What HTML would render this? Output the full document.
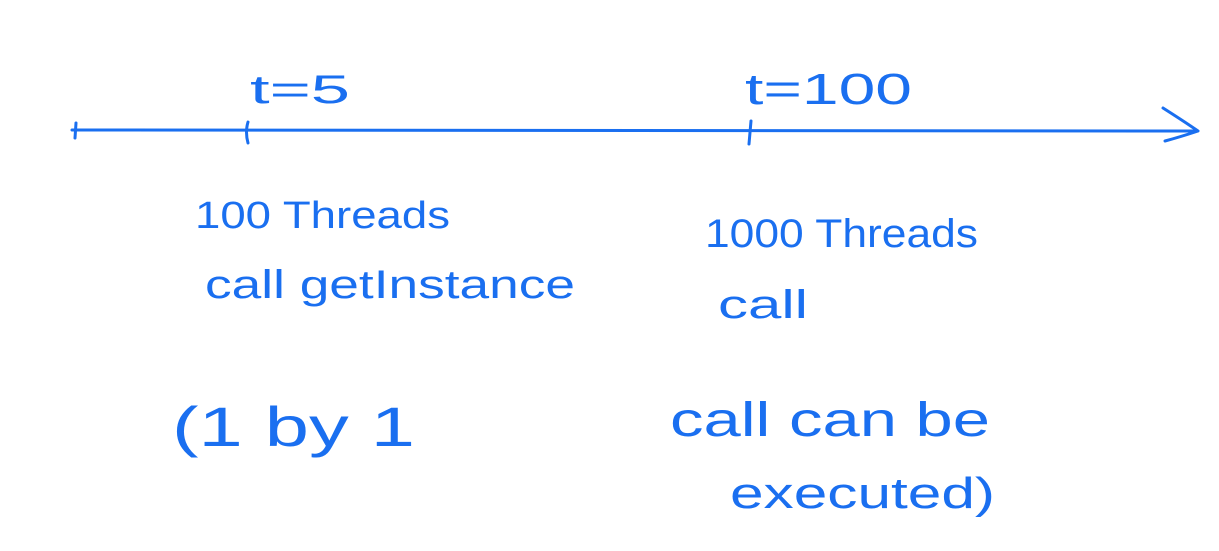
<!DOCTYPE html>
<html><head><meta charset="utf-8"><style>
html,body{margin:0;padding:0;background:#fff;}
svg{display:block}
text{font-family:"Liberation Sans",sans-serif;fill:#1a6ff0;}
</style></head><body>
<svg width="1219" height="551" viewBox="0 0 1219 551">
<g stroke="#1a6ff0" stroke-width="3" fill="none" stroke-linecap="round" stroke-linejoin="round">
<path d="M72 130 L1196 131"/>
<path d="M1163 108 Q1185 122 1198 131 Q1180 137 1165 141"/>
<path d="M76 123 L75 138"/>
<path d="M248 122 Q245 132 248 143"/>
<path d="M751 121 L749 144"/>
</g>
<text x="250" y="103" font-size="40" textLength="100" lengthAdjust="spacingAndGlyphs">t=5</text>
<text x="745" y="104" font-size="44" textLength="167" lengthAdjust="spacingAndGlyphs">t=100</text>
<text x="195" y="228" font-size="38" textLength="255" lengthAdjust="spacingAndGlyphs">100 Threads</text>
<text x="205" y="298" font-size="40" textLength="370" lengthAdjust="spacingAndGlyphs">call getInstance</text>
<text x="705" y="247" font-size="40" textLength="273" lengthAdjust="spacingAndGlyphs">1000 Threads</text>
<text x="718" y="318" font-size="40" textLength="90" lengthAdjust="spacingAndGlyphs">call</text>
<text x="172" y="446" font-size="56" textLength="243" lengthAdjust="spacingAndGlyphs">(1 by 1</text>
<text x="670" y="436" font-size="48" textLength="320" lengthAdjust="spacingAndGlyphs">call can be</text>
<text x="730" y="508" font-size="44" textLength="265" lengthAdjust="spacingAndGlyphs">executed)</text>
</svg>
</body></html>
